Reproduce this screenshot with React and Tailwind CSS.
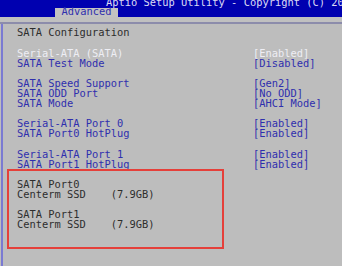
import React from "react";

const mono = { fontFamily: '"DejaVu Sans Mono", "Liberation Mono", monospace' };

function Row({ label, value, labelClass = "text-[#2f2fae]", valueClass = "text-[#2f2fae]" }) {
  return (
    <div className="grid grid-cols-[236px_1fr] h-[9.8px] leading-[9.8px] whitespace-nowrap">
      <div className={labelClass}>{label}</div>
      <div className={valueClass}>{value}</div>
    </div>
  );
}

export default function App() {
  return (
    <div
      className="w-[342px] h-[266px] overflow-hidden bg-[#bdbdbd] text-[10.4px] flex flex-col"
      style={mono}
    >
      {/* header */}
      <div className="h-[17px] bg-[#0000b0] overflow-hidden flex flex-col shrink-0">
        <div className="-mt-[2.7px] pl-[106px] h-[10.2px] leading-[10.2px] whitespace-nowrap text-[#dcdcf4]">
          Aptio Setup Utility - Copyright (C) 2011 American Megatrends, Inc.
        </div>
        <div className="ml-[55px] mt-[0.5px] w-[63px] h-[9px] bg-[#c2c2c2] pl-[6.5px] leading-[7px] text-[#2f2fae] whitespace-nowrap">
          Advanced
        </div>
      </div>
      <div className="h-[4.7px] bg-[#c0c0c0] shrink-0" />
      <div className="h-[2px] bg-[#8c8cab] shrink-0" />
      {/* body */}
      <div className="flex flex-1">
        <div className="ml-[1px] w-[2px] bg-[#7a7ad2]" />
        <div className="flex-1 pl-[14px] pt-[4.6px] flex flex-col gap-[10.8px]">
          <div>
            <Row label="SATA Configuration" value="" labelClass="text-[#2d2d2d]" />
          </div>
          <div>
            <Row
              label="Serial-ATA (SATA)"
              value="[Enabled]"
              labelClass="text-[#eeeef4]"
              valueClass="text-[#eeeef4]"
            />
            <Row label="SATA Test Mode" value="[Disabled]" />
          </div>
          <div>
            <Row label="SATA Speed Support" value="[Gen2]" />
            <Row label="SATA ODD Port" value="[No ODD]" />
            <Row label="SATA Mode" value="[AHCI Mode]" />
          </div>
          <div>
            <Row label="Serial-ATA Port 0" value="[Enabled]" />
            <Row label="SATA Port0 HotPlug" value="[Enabled]" />
          </div>
          <div className="flex flex-col">
            <Row label="Serial-ATA Port 1" value="[Enabled]" />
            <Row label="SATA Port1 HotPlug" value="[Enabled]" />
            <div className="-mt-[0.5px] -ml-[10px] w-[217px] border-2 border-[#e5403a] pl-[8px] pt-[9px] pb-[17px] flex flex-col gap-[10.8px] text-[#2d2d2d] relative">
              <div className="leading-[9.8px] whitespace-pre">
                <div className="h-[9.8px]">SATA Port0</div>
                <div className="h-[9.8px]">{"Centerm SSD    (7.9GB)"}</div>
              </div>
              <div className="leading-[9.8px] whitespace-pre">
                <div className="h-[9.8px]">SATA Port1</div>
                <div className="h-[9.8px]">{"Centerm SSD    (7.9GB)"}</div>
              </div>
            </div>
          </div>
        </div>
      </div>
    </div>
  );
}
